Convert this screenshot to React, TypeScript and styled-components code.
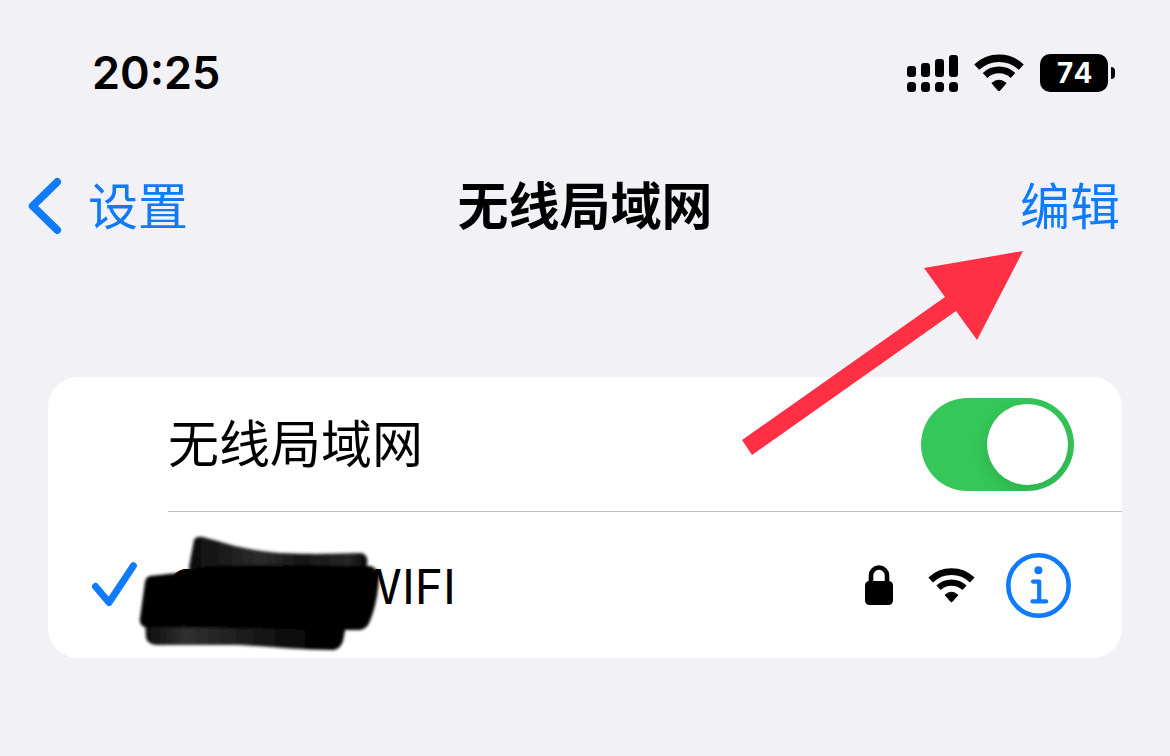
import React, { useState } from "react";
import styled, { createGlobalStyle } from "styled-components";

const ink = "#000000";
const blue = "#0f7bfb";
const surface = "#ffffff";
const backdrop = "#f1f1f6";
const cjkFont = `"Noto Sans CJK SC", sans-serif`;

const GlobalStyle = createGlobalStyle`
  *, *::before, *::after {
    box-sizing: border-box;
  }

  body {
    margin: 0;
    background: ${backdrop};
    color: ${ink};
    font-family: Inter, ${cjkFont};
  }
`;

const Page = styled.div`
  position: relative;
  min-height: 100vh;
  overflow: hidden;
  background: ${backdrop};
`;

const StatusBar = styled.div`
  display: flex;
  align-items: center;
  justify-content: space-between;
  height: 146px;
  padding: 0 55px 0 92px;
`;

const Clock = styled.time`
  font-size: 45px;
  font-weight: 600;
  line-height: 56px;
`;

const StatusIcons = styled.div`
  display: flex;
  align-items: center;
  gap: 16px;
`;

const Battery = styled.div`
  display: flex;
  align-items: center;
  gap: 3px;
`;

const BatteryBody = styled.span`
  width: 68px;
  border-radius: 10px;
  background: ${ink};
  color: ${surface};
  font-size: 28px;
  font-weight: 700;
  font-variant-numeric: tabular-nums;
  line-height: 38px;
  text-align: center;
`;

const BatteryCap = styled.span`
  width: 4px;
  height: 12px;
  border-radius: 0 4px 4px 0;
  background: ${ink};
`;

const NavBar = styled.header`
  display: grid;
  grid-template-columns: 1fr auto 1fr;
  align-items: center;
  height: 120px;
`;

const Title = styled.h1`
  margin: 0;
  padding-bottom: 6px;
  font-family: ${cjkFont};
  font-size: 51px;
  font-weight: 700;
  line-height: 64px;
`;

const NavButton = styled.button<{ $side: "start" | "end" }>`
  display: flex;
  align-items: center;
  gap: 26px;
  justify-self: ${({ $side }) => $side};
  padding: ${({ $side }) => ($side === "start" ? "0 0 0 28px" : "0 50px 0 0")};
  border: 0;
  background: none;
  color: ${blue};
  font-family: ${cjkFont};
  font-size: 50px;
  line-height: 64px;
  cursor: pointer;
`;

const NavLabel = styled.span`
  padding-bottom: 6px;
`;

const Card = styled.main`
  margin: 111px 48px 0;
  border-radius: 30px;
  background: ${surface};
`;

const SwitchRow = styled.div`
  display: flex;
  align-items: center;
  justify-content: space-between;
  height: 135px;
  margin-left: 120px;
  padding-right: 48px;
  border-bottom: 1px solid #c3c3c7;
`;

const SwitchLabel = styled.label`
  padding-bottom: 6px;
  font-family: ${cjkFont};
  font-size: 51px;
  line-height: 64px;
`;

const Switch = styled.input`
  appearance: none;
  display: flex;
  align-items: center;
  width: 153px;
  height: 93px;
  margin: 0;
  padding: 0 6px;
  overflow: hidden;
  border-radius: 47px;
  background: #d9d9de;
  cursor: pointer;

  &::before {
    content: "";
    width: 81px;
    height: 81px;
    border-radius: 50%;
    background: ${surface};
    box-shadow: 0 6px 18px rgba(0, 0, 0, 0.13);
  }

  &:checked {
    justify-content: flex-end;
    background: #35c759;
  }
`;

const NetworkRow = styled.div`
  position: relative;
  display: flex;
  align-items: center;
  justify-content: space-between;
  height: 146px;
  padding: 0 51px 0 43px;
`;

const Network = styled.div`
  display: flex;
  align-items: center;
  gap: 30px;
`;

const NetworkName = styled.span`
  display: flex;
  justify-content: space-between;
  width: 288px;
  padding-top: 4px;
  font-size: 48px;
  line-height: 64px;
`;

const NetworkStatus = styled.div`
  display: flex;
  align-items: center;
  gap: 31px;
`;

const NetworkIcons = styled.div`
  display: flex;
  align-items: center;
  gap: 35px;
`;

const InfoButton = styled.button`
  display: flex;
  padding: 0;
  border: 0;
  background: none;
  cursor: pointer;
`;

const Scribble = styled.svg`
  position: absolute;
  top: 18px;
  left: 82px;
`;

const Arrow = styled.svg`
  position: absolute;
  top: 251px;
  right: 147px;
  pointer-events: none;
`;

const signalColumns = [
  { x: 0, top: 11 },
  { x: 14, top: 8 },
  { x: 28, top: 4 },
  { x: 42, top: 0 },
];

function SignalIcon() {
  return (
    <svg width="51" height="37" viewBox="0 0 51 37" fill={ink} aria-hidden="true">
      {signalColumns.map(({ x, top }) => (
        <g key={x}>
          <rect x={x} y={top} width="9" height={22 - top} rx="3" />
          <rect x={x} y="27" width="9" height="10" rx="3.5" />
        </g>
      ))}
    </svg>
  );
}

function WifiIcon({ width, height }: { width: number; height: number }) {
  return (
    <svg width={width} height={height} viewBox="0 0 48 36" fill="none" stroke={ink} aria-hidden="true">
      <path d="M2.6 12.4A31 31 0 0 1 45.4 12.4" strokeWidth="7" />
      <path d="M10.6 20.4A19.5 19.5 0 0 1 37.4 20.4" strokeWidth="6.4" />
      <path
        d="M17.4 27.8Q24 22 30.6 27.8L24.8 34.4Q24 35.2 23.2 34.4Z"
        fill={ink}
        strokeWidth="1"
        strokeLinejoin="round"
      />
    </svg>
  );
}

function ChevronIcon() {
  return (
    <svg width="34" height="58" viewBox="0 0 34 58" fill="none" aria-hidden="true">
      <path d="M29.2 5L4.6 29L29.2 53" stroke={blue} strokeWidth="7.8" strokeLinecap="round" strokeLinejoin="round" />
    </svg>
  );
}

function CheckIcon() {
  return (
    <svg width="47" height="48" viewBox="0 0 47 48" fill="none" aria-hidden="true">
      <path d="M4.5 25.5L18 41.5L42.4 4.8" stroke={blue} strokeWidth="7" strokeLinecap="round" strokeLinejoin="round" />
    </svg>
  );
}

function LockIcon() {
  return (
    <svg width="28" height="40" viewBox="0 0 28 40" fill="none" aria-hidden="true">
      <path d="M6 18V10.5a8 8 0 0 1 16 0V18" stroke={ink} strokeWidth="4.6" />
      <rect y="16" width="28" height="24" rx="4.5" fill={ink} />
    </svg>
  );
}

function InfoIcon() {
  return (
    <svg width="65" height="65" viewBox="0 0 65 65" fill="none" stroke={blue} aria-hidden="true">
      <circle cx="32.5" cy="32.5" r="30.2" strokeWidth="4.6" />
      <circle cx="32.4" cy="17.2" r="4" fill={blue} stroke="none" />
      <path d="M27 28.6H33.2V48.4M26.4 48.4H40.2" strokeWidth="4.2" strokeLinecap="round" strokeLinejoin="round" />
    </svg>
  );
}

function NameScribble() {
  return (
    <Scribble width="260" height="128" viewBox="130 530 260 128" aria-hidden="true">
      <defs>
        <filter id="brush" x="-5%" y="-10%" width="110%" height="120%">
          <feGaussianBlur stdDeviation="1.5" />
        </filter>
        <linearGradient id="upper" x1="0" x2="1" y1="0" y2="0">
          <stop offset="0" stopColor="#0c0c0c" />
          <stop offset="0.4" stopColor="#2c2c2c" />
          <stop offset="0.62" stopColor="#161616" />
          <stop offset="0.9" stopColor="#262626" />
          <stop offset="1" stopColor="#060606" />
        </linearGradient>
        <linearGradient id="lower" x1="0" x2="1" y1="0" y2="0">
          <stop offset="0" stopColor="#0c0c0c" />
          <stop offset="0.2" stopColor="#303030" />
          <stop offset="0.5" stopColor="#1c1c1c" />
          <stop offset="0.8" stopColor="#060606" />
        </linearGradient>
      </defs>
      <g filter="url(#brush)">
        <path
          d="M194 540Q196 536 203 537C222 542 238 548 262 551C290 555 330 554 361 553Q369 555 367 564L366 580L192 580L189 567Z"
          fill="url(#upper)"
        />
        <path
          d="M145 620L146 638Q148 644 156 645L240 645C275 647 300 650 334 650Q341 648 343 641L347 620Z"
          fill="url(#lower)"
        />
        <path
          d="M150 576L168 574Q184 573 198 567C230 564 300 565 371 566Q379 569 379 578C378 595 375 608 370 621Q367 629 360 630L347 630L144 627Q139 624 140 618L145 582Q146 577 150 576Z"
          fill={ink}
        />
      </g>
    </Scribble>
  );
}

export default function App() {
  const [enabled, setEnabled] = useState(true);

  return (
    <Page lang="zh-CN">
      <GlobalStyle />
      <StatusBar>
        <Clock>20:25</Clock>
        <StatusIcons>
          <SignalIcon />
          <WifiIcon width={50} height={38} />
          <Battery>
            <BatteryBody>74</BatteryBody>
            <BatteryCap />
          </Battery>
        </StatusIcons>
      </StatusBar>

      <NavBar>
        <NavButton type="button" $side="start">
          <ChevronIcon />
          <NavLabel>设置</NavLabel>
        </NavButton>
        <Title>无线局域网</Title>
        <NavButton type="button" $side="end">
          <NavLabel>编辑</NavLabel>
        </NavButton>
      </NavBar>

      <Card>
        <SwitchRow>
          <SwitchLabel htmlFor="wlan">无线局域网</SwitchLabel>
          <Switch
            id="wlan"
            type="checkbox"
            role="switch"
            checked={enabled}
            onChange={(event) => setEnabled(event.target.checked)}
          />
        </SwitchRow>
        <NetworkRow>
          <Network>
            <CheckIcon />
            <NetworkName>
              <span>C</span>
              <span>WIFI</span>
            </NetworkName>
          </Network>
          <NameScribble />
          <NetworkStatus>
            <NetworkIcons>
              <LockIcon />
              <WifiIcon width={47} height={35} />
            </NetworkIcons>
            <InfoButton type="button" aria-label="详细信息">
              <InfoIcon />
            </InfoButton>
          </NetworkStatus>
        </NetworkRow>
      </Card>

      <Arrow width="281" height="204" viewBox="0 0 281 204" aria-hidden="true">
        <path d="M281 0L182 17L203 46L0 189L10 204L214 60L235 89Z" fill="#ff3044" />
      </Arrow>
    </Page>
  );
}
